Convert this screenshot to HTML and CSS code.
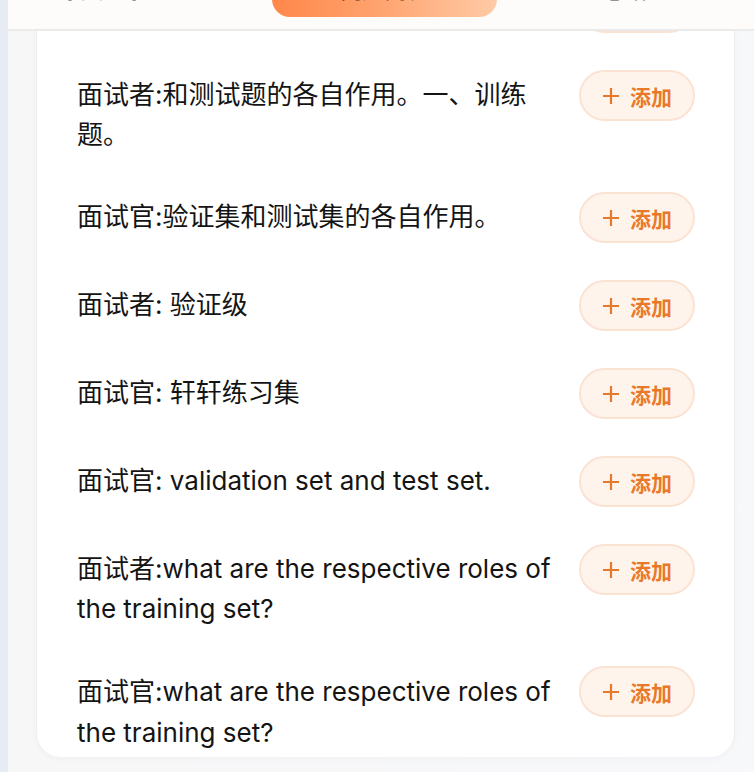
FILE: index.html
```html
<!DOCTYPE html>
<html lang="zh-CN">
<head>
<meta charset="utf-8">
<title>面试记录</title>
<link rel="stylesheet" href="styles.css">
</head>
<body>
<div class="app">
  <div class="rail"></div>
  <div class="main">
    <header class="header">
      <nav class="tabs">
        <div class="tab tab-left">原文记录</div>
        <div class="tab tab-active">问题列表</div>
        <div class="tab tab-right">总结</div>
      </nav>
    </header>
    <div class="content">
      <section class="card">
        <div class="list">
          <div class="row">
            <p class="text">面试官: 训练集</p>
            <button class="add"><svg class="plus" viewBox="0 0 18 18"><path d="M9 1v16M1 9h16"/></svg><span>添加</span></button>
          </div>
          <div class="row">
            <p class="text">面试者:和测试题的各自作用。一、训练题。</p>
            <button class="add"><svg class="plus" viewBox="0 0 18 18"><path d="M9 1v16M1 9h16"/></svg><span>添加</span></button>
          </div>
          <div class="row">
            <p class="text">面试官:验证集和测试集的各自作用。</p>
            <button class="add"><svg class="plus" viewBox="0 0 18 18"><path d="M9 1v16M1 9h16"/></svg><span>添加</span></button>
          </div>
          <div class="row">
            <p class="text">面试者: 验证级</p>
            <button class="add"><svg class="plus" viewBox="0 0 18 18"><path d="M9 1v16M1 9h16"/></svg><span>添加</span></button>
          </div>
          <div class="row">
            <p class="text">面试官: 轩轩练习集</p>
            <button class="add"><svg class="plus" viewBox="0 0 18 18"><path d="M9 1v16M1 9h16"/></svg><span>添加</span></button>
          </div>
          <div class="row">
            <p class="text">面试官: validation set and test set.</p>
            <button class="add"><svg class="plus" viewBox="0 0 18 18"><path d="M9 1v16M1 9h16"/></svg><span>添加</span></button>
          </div>
          <div class="row">
            <p class="text">面试者:what are the respective roles of the training set?</p>
            <button class="add"><svg class="plus" viewBox="0 0 18 18"><path d="M9 1v16M1 9h16"/></svg><span>添加</span></button>
          </div>
          <div class="row">
            <p class="text">面试官:what are the respective roles of the training set?</p>
            <button class="add"><svg class="plus" viewBox="0 0 18 18"><path d="M9 1v16M1 9h16"/></svg><span>添加</span></button>
          </div>
        </div>
      </section>
    </div>
  </div>
</div>
</body>
</html>
```

FILE: styles.css
```css
* { box-sizing: border-box; }

html, body {
  margin: 0;
  padding: 0;
  height: 100%;
}

body {
  font-family: Inter, "Noto Sans CJK SC", sans-serif;
  background: #f6f7f9;
  color: #141414;
  overflow: hidden;
}

.app {
  display: flex;
  height: 772px;
}

.rail {
  width: 8px;
  flex: 0 0 8px;
  background: #e7ebf3;
}

.main {
  flex: 1;
  display: flex;
  flex-direction: column;
  background: linear-gradient(90deg, #f7f7f8 0%, #f7f8fa 100%);
  min-width: 0;
}

.header {
  height: 31px;
  flex: 0 0 31px;
  overflow: hidden;
  background: #fdfcfb;
  border-bottom: 2px solid #ebebeb;
}

.tabs {
  display: flex;
  align-items: flex-start;
  height: 50px;
  margin-top: -33px;
  padding-left: 40px;
}

.tab {
  font-size: 22px;
  color: #444;
  text-align: center;
  line-height: 46px;
  height: 50px;
}

.tab-left { width: 110px; }

.tab-active {
  width: 225px;
  margin-left: 114px;
  border-radius: 0 0 18px 18px;
  background: linear-gradient(90deg, #ff874a 0%, #ffa26d 45%, #ffcba6 100%);
  color: #5a3520;
}

.tab-right {
  width: 110px;
  margin-left: 73px;
}

.content {
  flex: 1;
  padding: 0 19px 0 28px;
  min-height: 0;
}

.card {
  background: #fff;
  border-left: 1px solid #eeeeee;
  border-right: 1px solid #eeeeee;
  border-radius: 0 0 24px 24px;
  box-shadow: 0 2px 6px rgba(30, 40, 60, 0.03);
  overflow: hidden;
  padding: 0 39px 4px 40px;
}

.list {
  display: flex;
  flex-direction: column;
  gap: 37px;
  margin-top: -49px;
}

.row {
  display: flex;
  align-items: flex-start;
  justify-content: space-between;
}

.text {
  margin: 0;
  width: 480px;
  padding-top: 5px;
  font-size: 26px;
  line-height: 40px;
  color: #141414;
}

.row:last-child .text { line-height: 41px; }

.add {
  flex: 0 0 auto;
  display: flex;
  align-items: center;
  gap: 10px;
  height: 51px;
  padding: 0 21px 0 21px;
  border: 2px solid #fbe3d4;
  border-radius: 26px;
  background: #fff4ec;
  color: #e8792a;
  font-family: "Noto Sans CJK SC", sans-serif;
  font-size: 21px;
  font-weight: 700;
  cursor: pointer;
}

.plus {
  width: 18px;
  height: 18px;
  fill: none;
  stroke: #e8792a;
  stroke-width: 2.2;
}
```
